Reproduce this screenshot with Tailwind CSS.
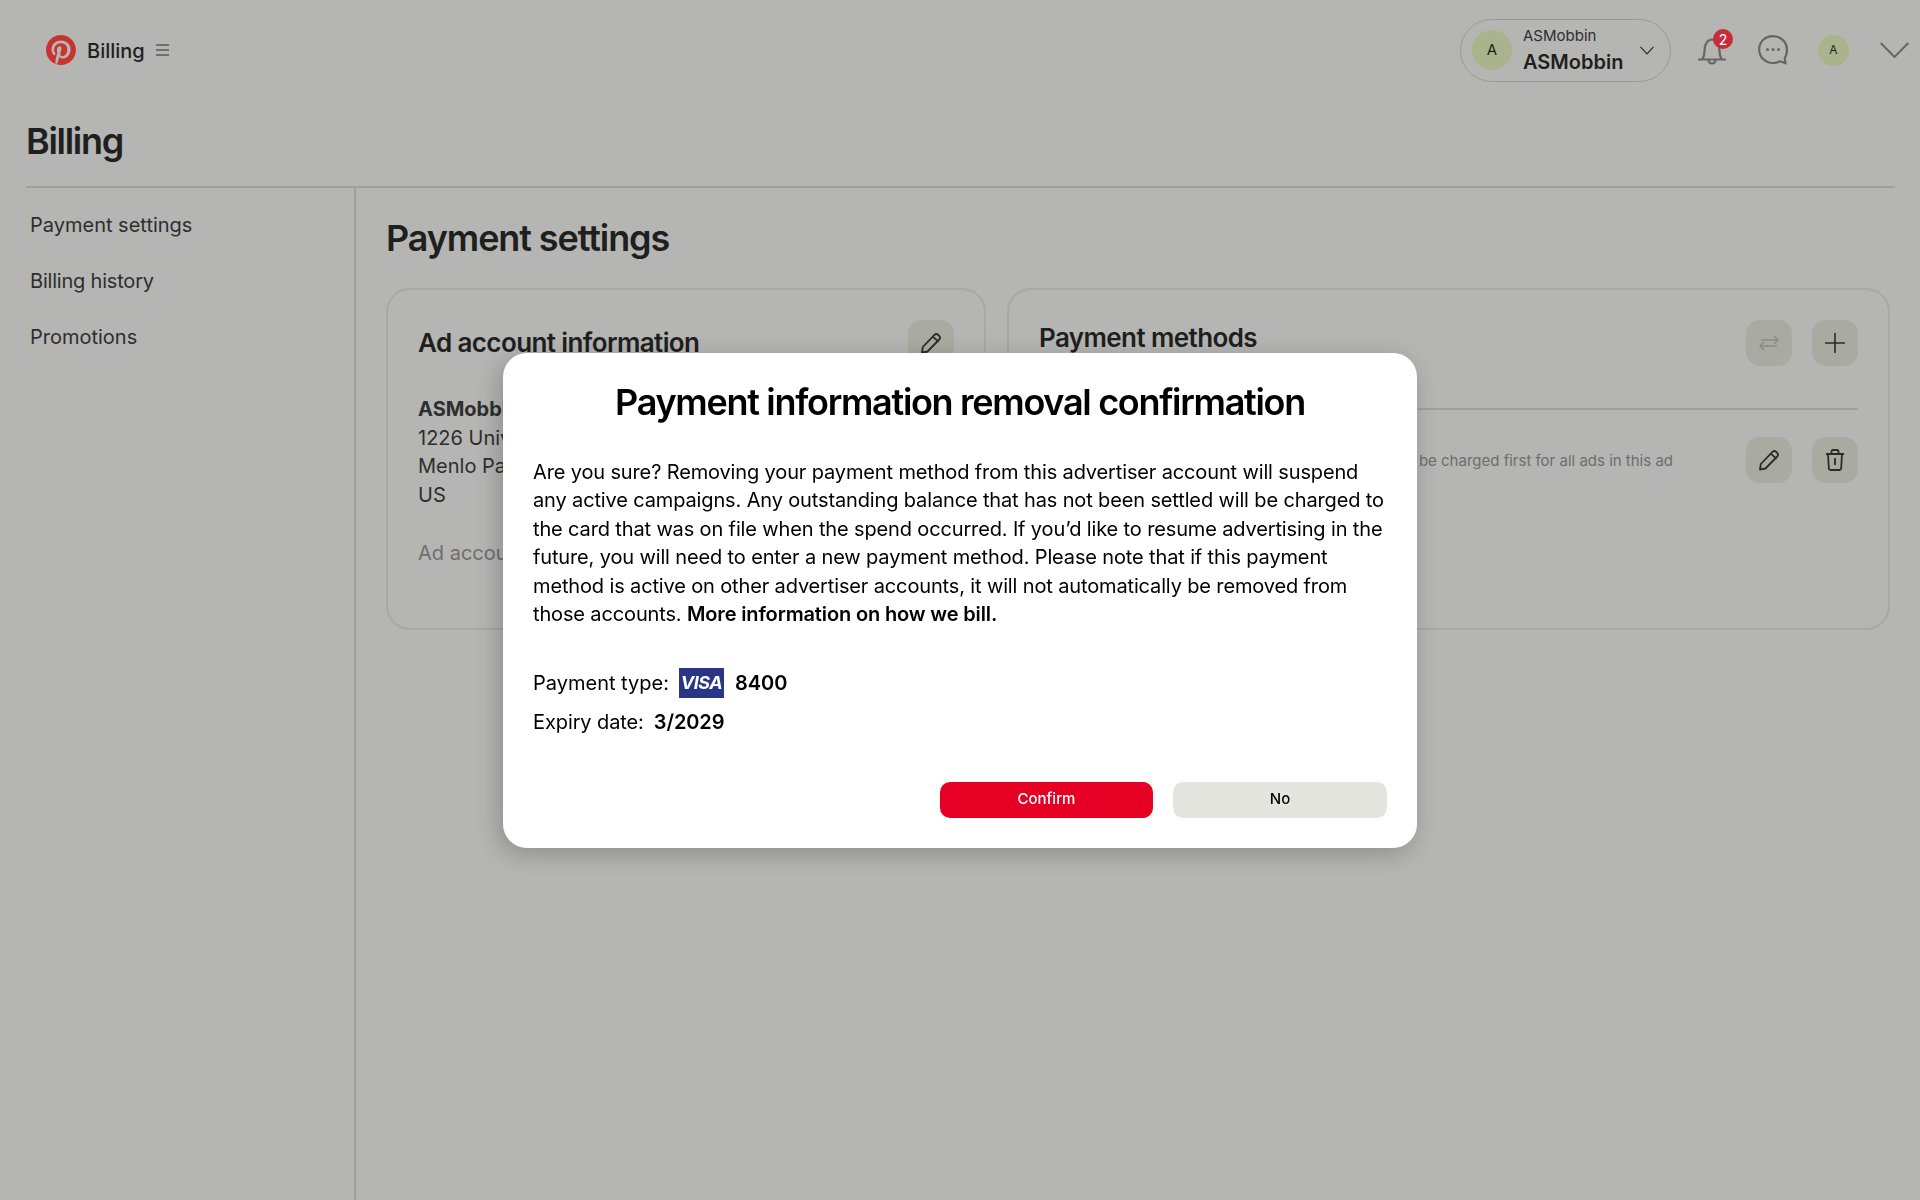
<!DOCTYPE html>
<html lang="en">
<head>
  <meta charset="UTF-8">
  <meta name="viewport" content="width=device-width, initial-scale=1.0">
  <title>Billing - Payment settings</title>
  <script src="https://cdn.jsdelivr.net/npm/@tailwindcss/browser@4"></script>
</head>
<body class="bg-[#b5b5b3] text-[#1f1f1e] font-['Inter',sans-serif] overflow-hidden">
  <div class="h-[1200px] w-[1920px] flex flex-col">
    <!-- Top bar -->
    <header class="h-[100px] shrink-0 flex items-center justify-between pl-[46px] pr-[11px]">
      <div class="flex items-center">
        <svg class="w-[30px] h-[30px]" viewBox="0 0 24 24" fill="#c8322f"><path d="M12.017 0C5.396 0 .029 5.367.029 11.987c0 5.079 3.158 9.417 7.618 11.162-.105-.949-.199-2.403.041-3.439.219-.937 1.406-5.957 1.406-5.957s-.359-.72-.359-1.781c0-1.663.967-2.911 2.168-2.911 1.024 0 1.518.769 1.518 1.688 0 1.029-.653 2.567-.992 3.992-.285 1.193.6 2.165 1.775 2.165 2.128 0 3.768-2.245 3.768-5.487 0-2.861-2.063-4.869-5.008-4.869-3.41 0-5.409 2.562-5.409 5.199 0 1.033.394 2.143.889 2.741.099.12.112.225.085.345-.09.375-.293 1.199-.334 1.363-.053.225-.172.271-.401.165-1.495-.69-2.433-2.878-2.433-4.646 0-3.776 2.748-7.252 7.92-7.252 4.158 0 7.392 2.967 7.392 6.923 0 4.135-2.607 7.462-6.233 7.462-1.214 0-2.354-.629-2.758-1.379l-.749 2.848c-.269 1.045-1.004 2.352-1.498 3.146 1.123.345 2.306.535 3.55.535 6.607 0 11.985-5.365 11.985-11.987C23.97 5.39 18.592.026 11.985.026L12.017 0z"/></svg>
        <span class="ml-[11px] text-[20px] font-medium pt-[1px]">Billing</span>
        <svg class="ml-[11px] w-[13px] h-[12px]" viewBox="0 0 13 12" stroke="#2b2b2b" stroke-width="1.2"><path d="M0 1h13M0 6h13M0 11h13"/></svg>
      </div>
      <div class="flex items-center">
        <div class="w-[211px] h-[63px] rounded-full border border-[#9a9a98] flex items-center pl-[11px]">
          <div class="w-[40px] h-[40px] rounded-full bg-[#a9b48c] flex items-center justify-center text-[15px]">A</div>
          <div class="ml-[11px] w-[117px] pt-[3px]">
            <div class="text-[15px] leading-[20px] text-[#2e2e2e]">ASMobbin</div>
            <div class="text-[20px] leading-[32px] font-semibold">ASMobbin</div>
          </div>
          <svg class="w-[14px] h-[9px]" viewBox="0 0 14 9" fill="none" stroke="#2b2b2b" stroke-width="1.2"><path d="M.5 .8 7 7.8 13.5 .8"/></svg>
        </div>
        <div class="relative ml-[26px] w-[30px] h-[30px]">
          <svg class="w-[30px] h-[30px]" viewBox="0 0 30 30" fill="none" stroke="#666664" stroke-width="2.200"><path d="M1 24.500h28M5 24.500c2-2.500 2.500-4 2.500-9C7.500 9 10.500 4.500 15 4.500s7.500 4.500 7.500 11c0 5 .5 6.500 2.500 9"/><path d="M11.500 24.500c0 2.500 1.500 4 3.500 4s3.500-1.500 3.500-4"/></svg>
          <span class="absolute -top-[6px] right-[-6px] w-[20px] h-[20px] rounded-full bg-[#c62c3a] text-white text-[14px] flex items-center justify-center">2</span>
        </div>
        <svg class="ml-[31px] w-[30px] h-[30px]" viewBox="0 0 30 30" fill="none" stroke="#666664" stroke-width="2.200"><path d="M15 1.200C7 1.200 1.200 7 1.200 14.500S7 28 15 28c2.500 0 5-.5 7-1.800l5.500 2 -.8-5.200c1.500-2.300 2.300-5 2.300-8C29 7 23 1.200 15 1.200Z"/><circle cx="9.500" cy="14.500" r="1.500" fill="#666664" stroke="none"/><circle cx="15" cy="14.500" r="1.500" fill="#666664" stroke="none"/><circle cx="20.500" cy="14.500" r="1.500" fill="#666664" stroke="none"/></svg>
        <div class="ml-[30px] w-[31px] h-[31px] rounded-full bg-[#a9b48c] flex items-center justify-center text-[12px]">A</div>
        <svg class="ml-[31px] w-[29px] h-[16px]" viewBox="0 0 29 16" fill="none" stroke="#666664" stroke-width="2"><path d="M.7 1 14.500 15 28.300 1"/></svg>
      </div>
    </header>

    <!-- Page title -->
    <div class="mx-[26px] w-[1869px] h-[88px] shrink-0 border-b-2 border-[#9f9f9d] pt-[17px]">
      <h1 class="text-[36px] leading-[48px] font-semibold tracking-[-1.3px]">Billing</h1>
    </div>

    <div class="flex flex-1">
      <!-- Sidebar -->
      <aside class="w-[356px] shrink-0 border-r-2 border-[#9f9f9d] pl-[30px] pt-[23px] text-[20px] text-[#2e2e2e]">
        <div class="h-[28px] leading-[28px]">Payment settings</div>
        <div class="h-[28px] leading-[28px] mt-[28px] tracking-[-0.2px]">Billing history</div>
        <div class="h-[28px] leading-[28px] mt-[28px]">Promotions</div>
      </aside>

      <!-- Main -->
      <main class="pl-[30px] pt-[27px] flex-1">
        <h2 class="text-[36px] leading-[46px] font-semibold tracking-[-1.1px]">Payment settings</h2>
        <div class="flex gap-[21px] mt-[27px]">
          <section class="w-[600px] h-[342px] rounded-[24px] border-2 border-[#a8a8a6] px-[30px] pt-[30px]">
            <div class="flex justify-between items-center">
              <h3 class="text-[26px] leading-[46px] font-semibold tracking-[-0.6px]">Ad account information</h3>
              <div class="w-[46px] h-[46px] rounded-[14px] bg-[#a9aaa2] flex items-center justify-center">
                <svg class="w-[22px] h-[22px]" viewBox="0 0 22 22" fill="none" stroke="#2b2b2b" stroke-width="1.800" stroke-linejoin="round"><path d="M2 20.500l.8-5.500L14.500 2.800c1-1 2.500-1 3.700 0l1 1c1 1.100 1 2.600 0 3.700L7.500 19.500ZM12.800 4.600l5.800 5.200"/></svg>
              </div>
            </div>
            <div class="mt-[29px] text-[20px] leading-[28.500px] text-[#2e2e2e]">
              <div class="font-bold">ASMobbin</div>
              <div>1226 University Drive</div>
              <div>Menlo Park, CA 94025</div>
              <div>US</div>
              <div class="mt-[30px] text-[#6e6e6c]">Ad account ID: 549768</div>
            </div>
          </section>
          <section class="w-[883px] h-[342px] rounded-[24px] border-2 border-[#a8a8a6] px-[30px] pt-[30px]">
            <div class="flex justify-between items-center h-[46px]">
              <h3 class="text-[26px] leading-[36px] font-semibold pb-[11px] tracking-[-0.6px]">Payment methods</h3>
              <div class="flex gap-[20px]">
                <div class="w-[46px] h-[46px] rounded-[14px] bg-[#a9aaa2] flex items-center justify-center">
                  <svg class="w-[20px] h-[18px]" viewBox="0 0 20 18" fill="none" stroke="#8a8a88" stroke-width="1.500"><path d="M2 6h17M15 2l4 4-4 4M18 12H1M5 8l-4 4 4 4"/></svg>
                </div>
                <div class="w-[46px] h-[46px] rounded-[14px] bg-[#a9aaa2] flex items-center justify-center">
                  <svg class="w-[20px] h-[20px]" viewBox="0 0 20 20" stroke="#2b2b2b" stroke-width="1.600"><path d="M0 10h20M10 0v20"/></svg>
                </div>
              </div>
            </div>
            <div class="mt-[42px] border-t-2 border-[#9f9f9d] flex justify-end items-center pt-[27px]">
              <span class="text-[15px] text-[#6e6e6c] mr-[73px] pt-[2px]">This payment method will be charged first for all ads in this ad</span>
              <div class="flex gap-[20px]">
                <div class="w-[46px] h-[46px] rounded-[14px] bg-[#a9aaa2] flex items-center justify-center">
                  <svg class="w-[22px] h-[22px]" viewBox="0 0 22 22" fill="none" stroke="#2b2b2b" stroke-width="1.800" stroke-linejoin="round"><path d="M2 20.500l.8-5.500L14.500 2.800c1-1 2.500-1 3.700 0l1 1c1 1.100 1 2.600 0 3.700L7.500 19.500ZM12.800 4.600l5.800 5.200"/></svg>
                </div>
                <div class="w-[46px] h-[46px] rounded-[14px] bg-[#a9aaa2] flex items-center justify-center">
                  <svg class="w-[20px] h-[22px]" viewBox="0 0 20 22" fill="none" stroke="#2b2b2b" stroke-width="1.800" stroke-linejoin="round"><path d="M1 5h18M6.500 5V2.500c0-.8.500-1.500 1.500-1.500h4c1 0 1.500.7 1.500 1.500V5M3 5l.8 14c.1 1.200.9 2 2 2h8.400c1.100 0 1.900-.8 2-2L17 5M10 9v7"/></svg>
                </div>
              </div>
            </div>
          </section>
        </div>
      </main>
    </div>
  </div>

  <!-- Modal -->
  <div class="fixed inset-0 flex items-center justify-center">
    <div class="w-[914px] h-[495px] bg-white rounded-[24px] shadow-[-4px_6px_24px_rgba(0,0,0,0.22)] px-[30px] pt-[26px] flex flex-col text-black">
      <h2 class="text-center text-[36px] leading-[46px] font-semibold tracking-[-1.3px] whitespace-nowrap">Payment information removal confirmation</h2>
      <p class="mt-[33px] text-[20px] leading-[28.500px] tracking-[-0.14px] whitespace-nowrap">
        Are you sure? Removing your payment method from this advertiser account will suspend<br>
        any active campaigns. Any outstanding balance that has not been settled will be charged to<br>
        the card that was on file when the spend occurred. If you’d like to resume advertising in the<br>
        future, you will need to enter a new payment method. Please note that if this payment<br>
        method is active on other advertiser accounts, it will not automatically be removed from<br>
        those accounts. <b class="font-semibold">More information on how we bill.</b>
      </p>
      <div class="mt-[39px] flex items-center h-[30px] text-[20px]">
        <span>Payment type:</span>
        <span class="ml-[10px] w-[45px] h-[30px] bg-[#2a3585] text-white font-bold italic text-[18px] tracking-[-0.5px] flex items-center justify-center">VISA</span>
        <b class="ml-[11px] font-semibold">8400</b>
      </div>
      <div class="mt-[9px] flex items-center h-[30px] text-[20px]">
        <span class="tracking-[-0.1px]">Expiry date:</span>
        <b class="ml-[10px] font-semibold tracking-[-0.1px]">3/2029</b>
      </div>
      <div class="mt-auto mb-[30px] flex justify-end gap-[20px] text-[15px] font-medium">
        <button class="w-[213px] h-[36px] rounded-[10px] bg-[#e60023] text-white">Confirm</button>
        <button class="w-[214px] h-[36px] rounded-[10px] bg-[#e5e5e0] text-black">No</button>
      </div>
    </div>
  </div>
</body>
</html>
